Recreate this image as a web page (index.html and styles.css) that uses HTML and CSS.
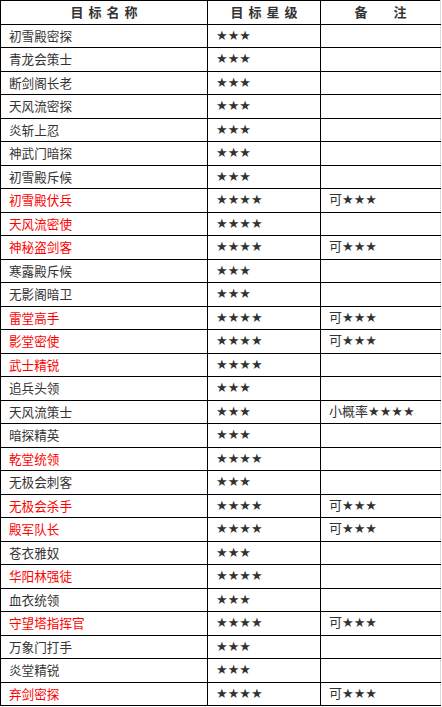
FILE: index.html
```html
<!DOCTYPE html>
<html>
<head>
<meta charset="utf-8">
<link rel="stylesheet" href="styles.css">
</head>
<body>
<table class="targets">
  <colgroup>
    <col class="c-name"><col class="c-star"><col class="c-note">
  </colgroup>
  <thead>
    <tr><th class="h-name">目标名称</th><th class="h-star">目标星级</th><th class="h-note">备注</th></tr>
  </thead>
  <tbody>
    <tr><td>初雪殿密探</td><td>★★★</td><td></td></tr>
    <tr><td>青龙会策士</td><td>★★★</td><td></td></tr>
    <tr><td>断剑阁长老</td><td>★★★</td><td></td></tr>
    <tr><td>天风流密探</td><td>★★★</td><td></td></tr>
    <tr><td>炎斩上忍</td><td>★★★</td><td></td></tr>
    <tr><td>神武门暗探</td><td>★★★</td><td></td></tr>
    <tr><td>初雪殿斥候</td><td>★★★</td><td></td></tr>
    <tr><td class="red">初雪殿伏兵</td><td>★★★★</td><td>可★★★</td></tr>
    <tr><td class="red">天风流密使</td><td>★★★★</td><td></td></tr>
    <tr><td class="red">神秘盗剑客</td><td>★★★★</td><td>可★★★</td></tr>
    <tr><td>寒露殿斥候</td><td>★★★</td><td></td></tr>
    <tr><td>无影阁暗卫</td><td>★★★</td><td></td></tr>
    <tr><td class="red">雷堂高手</td><td>★★★★</td><td>可★★★</td></tr>
    <tr><td class="red">影堂密使</td><td>★★★★</td><td>可★★★</td></tr>
    <tr><td class="red">武士精锐</td><td>★★★★</td><td></td></tr>
    <tr><td>追兵头领</td><td>★★★</td><td></td></tr>
    <tr><td>天风流策士</td><td>★★★</td><td>小概率★★★★</td></tr>
    <tr><td>暗探精英</td><td>★★★</td><td></td></tr>
    <tr><td class="red">乾堂统领</td><td>★★★★</td><td></td></tr>
    <tr><td>无极会刺客</td><td>★★★</td><td></td></tr>
    <tr><td class="red">无极会杀手</td><td>★★★★</td><td>可★★★</td></tr>
    <tr><td class="red">殿军队长</td><td>★★★★</td><td>可★★★</td></tr>
    <tr><td>苍衣雅奴</td><td>★★★</td><td></td></tr>
    <tr><td class="red">华阳林强徒</td><td>★★★★</td><td></td></tr>
    <tr><td>血衣统领</td><td>★★★</td><td></td></tr>
    <tr><td class="red">守望塔指挥官</td><td>★★★★</td><td>可★★★</td></tr>
    <tr><td>万象门打手</td><td>★★★</td><td></td></tr>
    <tr><td>炎堂精锐</td><td>★★★</td><td></td></tr>
    <tr><td class="red">弃剑密探</td><td>★★★★</td><td>可★★★</td></tr>
  </tbody>
</table>
</body>
</html>
```

FILE: styles.css
```css
html, body {
  margin: 0;
  padding: 0;
  background: #fff;
}
.targets {
  border-collapse: collapse;
  table-layout: fixed;
  width: 440px;
  font-family: "DejaVu Sans", "Noto Sans CJK SC", sans-serif;
  font-size: 13px;
  color: #333;
}
.c-name { width: 207px; }
.c-star { width: 113px; }
.c-note { width: 120px; }
.targets tr { height: 23.5px; }
.targets th,
.targets td {
  border: 1px solid #000;
  padding: 0 0 0 8px;
  line-height: 16px;
  white-space: nowrap;
  text-align: left;
  vertical-align: middle;
}
.targets td:last-child,
.targets th:last-child {
  border-right-color: #ddd;
}
.targets th {
  font-family: "Noto Sans CJK SC", sans-serif;
  font-weight: bold;
  text-align: center;
  padding: 0;
}
.h-name, .h-star { letter-spacing: 5px; text-indent: 5px; }
.h-note { letter-spacing: 26px; text-indent: 26px; }
.targets td:first-child {
  font-family: "Noto Sans CJK SC", sans-serif;
  font-size: 12.6px;
}
.targets td.red { color: #f00; }
```
